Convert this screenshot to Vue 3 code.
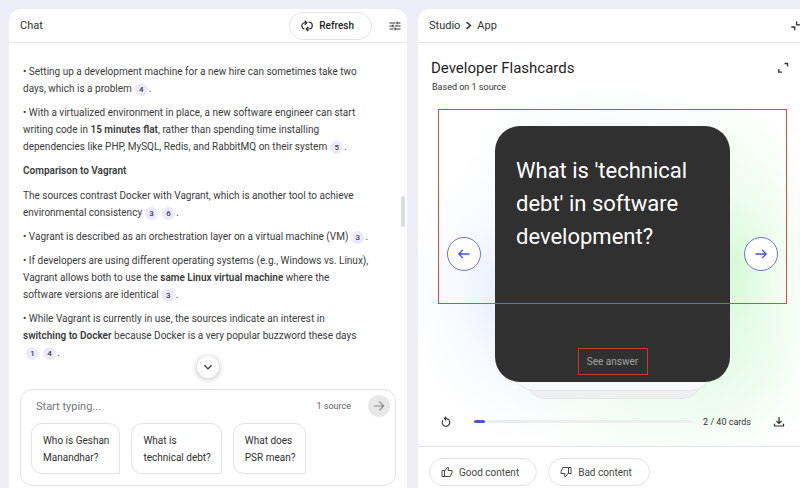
<script setup>
import { ref, computed } from 'vue'

const draft = ref('')
const card = ref(2)
const total = 40
const progress = computed(() => (card.value / total) * 100 + '%')

const answer = [
  { parts: [{ t: '• Setting up a development machine for a new hire can sometimes take two days, which is a problem' }, { c: 4 }, { t: '.' }] },
  { parts: [{ t: '• With a virtualized environment in place, a new software engineer can start writing code in ' }, { b: '15 minutes flat' }, { t: ', rather than spending time installing dependencies like PHP, MySQL, Redis, and RabbitMQ on their system' }, { c: 5 }, { t: '.' }] },
  { heading: 'Comparison to Vagrant' },
  { parts: [{ t: 'The sources contrast Docker with Vagrant, which is another tool to achieve environmental consistency' }, { c: 3 }, { c: 6 }, { t: '.' }] },
  { parts: [{ t: '• Vagrant is described as an orchestration layer on a virtual machine (VM)' }, { c: 3 }, { t: '.' }] },
  { parts: [{ t: '• If developers are using different operating systems (e.g., Windows vs. Linux), Vagrant allows both to use the ' }, { b: 'same Linux virtual machine' }, { t: ' where the software versions are identical' }, { c: 3 }, { t: '.' }] },
  { parts: [{ t: '• While Vagrant is currently in use, the sources indicate an interest in ' }, { b: 'switching to Docker' }, { t: ' because Docker is a very popular buzzword these days' }, { c: 1 }, { c: 4 }, { t: '.' }] }
]

const suggestions = [
  ['Who is Geshan', 'Manandhar?'],
  ['What is', 'technical debt?'],
  ['What does', 'PSR mean?']
]
</script>

<template>
  <main class="workspace">
    <section class="panel chat" aria-label="Chat">
      <header class="bar">
        <h2 class="bar-title">Chat</h2>
        <button class="pill refresh" type="button">
          <svg class="icon" viewBox="0 0 24 24" fill="none" stroke="currentColor" stroke-width="2.400">
            <path d="M6.500 18.500C3.500 17 1.700 14.500 1.700 11.500 1.700 8 4.500 5.500 8 5.500h2" />
            <path d="M7.500 1.500l4 4-4 4" />
            <path d="M15 4.500h1.500c3.500 0 6 3 6 6.500 0 4-3 7-7 7h-4" />
            <path d="M14.500 14l-4 4 4 4" />
          </svg>
          Refresh
        </button>
        <button class="bare" type="button" aria-label="Settings">
          <svg class="icon tune" viewBox="0 0 24 24" fill="currentColor">
            <path d="M1 17v2h8v-2H1zM1 5v2h12V5H1zm10 10v6h2v-2h10v-2H13v-2h-2zM7 9v2H1v2h6v2h2V9H7zm16 4v-2H11v2h12zm-8-4h2V7h6V5h-6V3h-2v6z" />
          </svg>
        </button>
      </header>

      <div class="thread">
        <template v-for="(block, i) in answer" :key="i">
          <h3 v-if="block.heading">{{ block.heading }}</h3>
          <p v-else><template v-for="(part, j) in block.parts" :key="j"><b v-if="part.b">{{ part.b }}</b><button v-else-if="part.c" class="cite" type="button">{{ part.c }}</button><template v-else>{{ part.t }}</template></template></p>
        </template>
        <span class="thumb" aria-hidden="true"></span>
        <button class="jump" type="button" aria-label="Jump to bottom">
          <svg class="icon" viewBox="0 0 24 24" fill="none" stroke="currentColor" stroke-width="3.200">
            <path d="M3.500 8l8.500 8.500L20.500 8" />
          </svg>
        </button>
      </div>

      <form class="composer" @submit.prevent>
        <div class="entry">
          <input v-model="draft" type="text" placeholder="Start typing..." aria-label="Message" />
          <span class="count">1 source</span>
          <button class="send" type="submit" aria-label="Send">
            <svg viewBox="0 0 24 24" fill="none" stroke="currentColor" stroke-width="2">
              <path d="M3 12h17M12.500 4.500L20 12l-7.500 7.500" />
            </svg>
          </button>
        </div>
        <div class="suggestions">
          <button v-for="s in suggestions" :key="s[0]" type="button">{{ s[0] }}<br />{{ s[1] }}</button>
        </div>
      </form>
    </section>

    <section class="panel studio" aria-label="Studio">
      <header class="bar">
        <nav class="crumbs" aria-label="Breadcrumb">
          <a href="#studio">Studio</a>
          <svg viewBox="0 0 12 12" fill="none" stroke="currentColor" stroke-width="2">
            <path d="M3.500 1.500L8.500 6l-5 4.500" />
          </svg>
          <a href="#app">App</a>
        </nav>
        <button class="bare collapse" type="button" aria-label="Collapse panel">
          <svg viewBox="0 0 12 12" fill="none" stroke="currentColor" stroke-width="1.300">
            <path d="M6.600 1.500v3.300H10M1.300 7h3.400v3.200" />
          </svg>
        </button>
      </header>

      <div class="viewer">
        <div class="heading">
          <div>
            <h1>Developer Flashcards</h1>
            <p>Based on 1 source</p>
          </div>
          <button class="bare" type="button" aria-label="Full screen">
            <svg class="expand" viewBox="0 0 12 12" fill="none" stroke="currentColor" stroke-width="1.300">
              <path d="M7.500 1.500h3v3M1.800 7v3.200h3.200" />
            </svg>
          </button>
        </div>

        <div class="stage">
          <button class="nav" type="button" aria-label="Previous card" @click="card = Math.max(1, card - 1)">
            <svg viewBox="0 0 12 12" fill="none" stroke="currentColor" stroke-width="1.300">
              <path d="M11.500 6H1M4.800 2L.9 6l3.900 4" />
            </svg>
          </button>
          <div class="deck">
            <article class="card">
              <p class="question">What is 'technical debt' in software development?</p>
              <button class="reveal" type="button">See answer</button>
            </article>
          </div>
          <button class="nav" type="button" aria-label="Next card" @click="card = Math.min(total, card + 1)">
            <svg viewBox="0 0 12 12" fill="none" stroke="currentColor" stroke-width="1.300">
              <path d="M.5 6H11M7.200 2l3.900 4-3.900 4" />
            </svg>
          </button>
          <span class="outline" aria-hidden="true"></span>
        </div>

        <div class="controls">
          <button class="bare" type="button" aria-label="Restart">
            <svg class="icon" viewBox="0 0 24 24" fill="none" stroke="currentColor" stroke-width="2.200">
              <path d="M10 5.200h2a7.600 7.600 0 1 1-6.300 3.300" />
              <path d="M12.500 1.500L9 5.200l3.500 3.700" />
            </svg>
          </button>
          <div class="track" role="progressbar" aria-label="Cards viewed" :aria-valuenow="card" aria-valuemin="0" :aria-valuemax="total">
            <span class="fill" :style="{ width: progress }"></span>
          </div>
          <span class="tally">{{ card }} / {{ total }} cards</span>
          <button class="bare" type="button" aria-label="Download">
            <svg class="icon" viewBox="0 0 24 24" fill="none" stroke="currentColor" stroke-width="2.400">
              <path d="M12 2v13M7 10l5 5 5-5M3 15.500V20h18v-4.500" />
            </svg>
          </button>
        </div>
      </div>

      <footer class="feedback">
        <button class="pill" type="button">
          <svg class="icon" viewBox="0 0 24 24" fill="none" stroke="currentColor" stroke-width="2">
            <path d="M2 9h5v12H2zM7 10l6.500-8 1.500 1.500L14 9h8v4l-3.500 8H7" />
          </svg>
          Good content
        </button>
        <button class="pill" type="button">
          <svg class="icon" viewBox="0 0 24 24" fill="none" stroke="currentColor" stroke-width="2">
            <path d="M22 15h-5V3h5zM17 14l-6.500 8L9 20.500l1-5.500H2v-4L5.500 3H17" />
          </svg>
          Bad content
        </button>
      </footer>
    </section>
  </main>
</template>

<style>
body {
  margin: 0;
  background: #eeeef9;
}
</style>

<style scoped>
* {
  box-sizing: border-box;
}

.workspace {
  display: grid;
  grid-template-columns: 398fr 382fr;
  gap: 11px;
  height: 100vh;
  padding: 9px 0 0 9px;
  overflow: hidden;
  color: #303030;
  font-family: Roboto, "Liberation Sans", sans-serif;
  font-size: 10px;
}

h1, h2, h3, p {
  margin: 0;
}

button {
  padding: 0;
  border: 0;
  background: none;
  color: inherit;
  font: inherit;
  cursor: pointer;
}

svg {
  display: block;
}

.icon {
  width: 12px;
  height: 12px;
}

.panel {
  display: flex;
  flex-direction: column;
  min-width: 0;
  background: #fff;
  overflow: hidden;
}

.chat {
  border-radius: 12px 12px 0 0;
}

.studio {
  border-radius: 12px 0 0 0;
}

.bar {
  display: flex;
  flex: none;
  align-items: center;
  height: 34px;
  padding: 0 6px 0 11px;
  border-bottom: 1px solid #e6e7ea;
}

.bar-title {
  flex: 1;
  font-size: 11px;
  font-weight: 400;
}

.pill {
  display: flex;
  align-items: center;
  gap: 6px;
  height: 28px;
  padding: 0 17px 0 11px;
  border: 1px solid #e2e3e6;
  border-radius: 14px;
}

.refresh {
  margin-right: 17px;
  color: #1f1f1f;
  font-weight: 500;
}

.thread {
  position: relative;
  flex: 1;
  min-height: 0;
  padding: 20px 37px 0 14px;
  color: #3a3b3d;
  line-height: 17px;
}

.thread p {
  margin-bottom: 7px;
}

.thread h3 {
  margin-bottom: 8px;
  font-size: 10px;
  font-weight: 600;
}

.thread b {
  font-weight: 600;
}

.cite {
  width: 13px;
  height: 13px;
  margin: 0 1px 0 3px;
  border-radius: 50%;
  background: #eceaf8;
  font-size: 8px;
  font-weight: 500;
  line-height: 13px;
  vertical-align: middle;
}

.thumb {
  position: absolute;
  top: 153px;
  right: 2px;
  width: 4px;
  height: 31px;
  border-radius: 2px;
  background: #dadce0;
}

.jump {
  position: absolute;
  bottom: 11px;
  left: 50%;
  display: grid;
  place-items: center;
  width: 22px;
  height: 22px;
  margin-left: -11px;
  border-radius: 50%;
  background: #fff;
  box-shadow: 0 1px 6px rgba(0, 0, 0, 0.28);
}

.jump .icon {
  width: 10px;
  height: 10px;
}

.composer {
  margin: 0 11px 2px;
  padding: 5px 5px 11px 10px;
  border: 1px solid #e2e3e6;
  border-radius: 12px;
}

.entry {
  display: flex;
  align-items: center;
  height: 22px;
  margin-bottom: 6px;
}

.entry input {
  flex: 1;
  min-width: 0;
  padding: 0 5px;
  border: 0;
  outline: 0;
  background: none;
  color: inherit;
  font: inherit;
  font-size: 11px;
}

.entry input::placeholder {
  color: #747679;
  opacity: 1;
}

.count {
  color: #5f6368;
  font-size: 9px;
}

.send {
  display: grid;
  place-items: center;
  width: 22px;
  height: 22px;
  margin-left: 17px;
  border-radius: 50%;
  background: #e8e8e8;
  color: #8a8a8a;
}

.send svg {
  width: 14px;
  height: 14px;
}

.suggestions {
  display: flex;
  gap: 11px;
}

.suggestions button {
  height: 51px;
  padding: 0 10px 0 11px;
  border: 1px solid #e2e3e6;
  border-radius: 11px 11px 1px 11px;
  line-height: 17px;
  text-align: left;
  white-space: nowrap;
}

.studio .bar {
  justify-content: space-between;
  padding-right: 0;
}

.crumbs {
  display: flex;
  align-items: center;
  gap: 4px;
  font-size: 11px;
}

.crumbs a {
  color: inherit;
  text-decoration: none;
}

.crumbs svg {
  width: 9px;
  height: 9px;
}

.collapse {
  margin-right: -2px;
}

.collapse svg,
.expand {
  width: 12px;
  height: 12px;
}

.viewer {
  display: flex;
  flex: 1;
  flex-direction: column;
  min-height: 0;
  background:
    radial-gradient(ellipse 90px 170px at 82% 56%, rgba(208, 249, 210, 0.9), rgba(220, 251, 221, 0.5) 45%, rgba(225, 251, 226, 0) 100%),
    radial-gradient(ellipse 110px 150px at 26% 62%, rgba(222, 233, 252, 0.9), rgba(232, 240, 253, 0.4) 50%, rgba(232, 240, 253, 0) 100%),
    radial-gradient(ellipse 170px 110px at 64% 80%, rgba(218, 250, 221, 0.7), rgba(225, 250, 228, 0) 100%),
    radial-gradient(ellipse 150px 70px at 50% 27%, rgba(230, 246, 243, 0.5), rgba(226, 244, 240, 0) 100%);
}

.heading {
  display: flex;
  align-items: flex-start;
  justify-content: space-between;
  height: 83px;
  padding: 14px 11px 0 13px;
}

.heading h1 {
  color: #1f1f1f;
  font-size: 15px;
  font-weight: 400;
  line-height: 22px;
}

.heading p {
  padding: 2px 0 0 1px;
  font-size: 9px;
  line-height: 12px;
}

.heading .bare {
  margin-top: 5px;
}

.stage {
  position: relative;
  display: grid;
  flex: 1;
  grid-template-columns: 34px 1fr 34px;
  align-items: center;
  gap: 14px;
  margin: 0 22px 0 29px;
}

.nav {
  display: grid;
  place-items: center;
  width: 34px;
  height: 34px;
  border: 1px solid #6d72cf;
  border-radius: 50%;
  background: #fff;
  color: #4650df;
}

.nav svg {
  width: 12px;
  height: 12px;
}

.deck {
  position: relative;
  z-index: 0;
  align-self: stretch;
}

.deck::before,
.deck::after {
  content: "";
  position: absolute;
  height: 60px;
  border: 1px solid #e3e7ea;
  border-radius: 22px;
}

.deck::before {
  right: 27px;
  bottom: -17px;
  left: 29px;
  z-index: -2;
  background: #eff0f0;
}

.deck::after {
  right: 15px;
  bottom: -9px;
  left: 15px;
  z-index: -1;
  border-radius: 26px;
  background: #f8f9fa;
}

.card {
  display: flex;
  flex-direction: column;
  align-items: center;
  justify-content: space-between;
  height: 100%;
  padding: 28px 21px 7px;
  border-radius: 25px;
  background: #303030;
}

.question {
  align-self: stretch;
  color: #fff;
  font-size: 22px;
  line-height: 33px;
}

.reveal {
  width: 70px;
  height: 27px;
  border: 1px solid #d23426;
  color: #a3a3a3;
}

.outline {
  position: absolute;
  top: -17px;
  right: -9px;
  left: -9px;
  z-index: 1;
  height: 195px;
  border: 1px solid #df4a3c;
  pointer-events: none;
}

.controls {
  display: flex;
  flex: none;
  align-items: center;
  height: 64px;
  padding: 15px 15px 0 22px;
}

.track {
  flex: 1;
  height: 3px;
  margin: 0 11px 0 22px;
  border-radius: 2px;
  background: #eceeef;
}

.fill {
  display: block;
  height: 3px;
  border-radius: 2px;
  background: #4b55e0;
}

.tally {
  margin-right: 22px;
  font-size: 9px;
}

.feedback {
  display: flex;
  flex: none;
  gap: 11px;
  height: 42px;
  padding: 11px 11px 0;
  border-top: 1px solid #e2e3e6;
  color: #444746;
}
</style>
